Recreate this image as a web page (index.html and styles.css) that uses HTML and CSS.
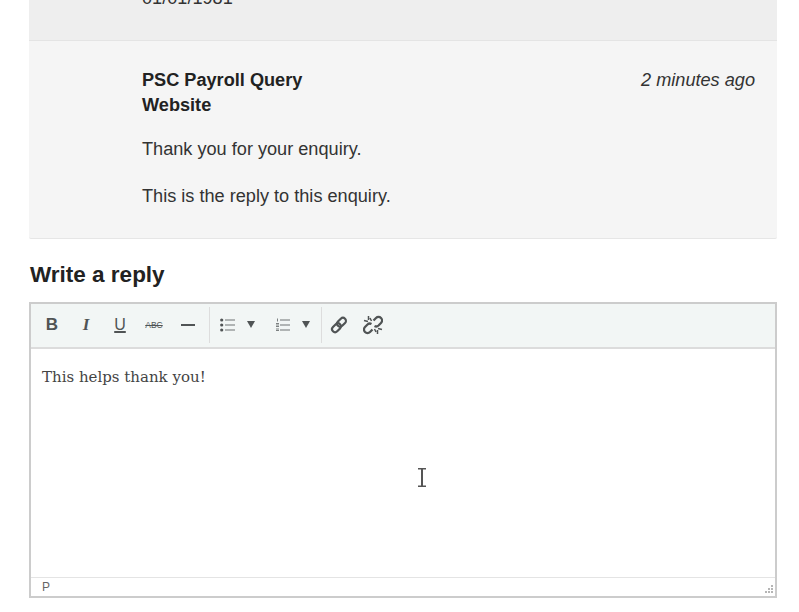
FILE: index.html
```html
<!DOCTYPE html>
<html>
<head>
<title>Write a reply</title>
<link rel="stylesheet" href="styles.css">
</head>
<body>
<div class="page">

<div class="msg msgOld">
  <div class="msgBody"><p class="oldDate">01/01/1981</p></div>
</div>

<div class="msg msgLast">
  <div class="msgBody">
    <div class="msgHead">
      <div class="msgFrom">PSC Payroll Query<br>Website</div>
      <div class="msgTime">2 minutes ago</div>
    </div>
    <p class="firstPara">Thank you for your enquiry.</p>
    <p>This is the reply to this enquiry.</p>
  </div>
</div>

<h2 class="replyTitle">Write a reply</h2>

<div class="editor">
  <div class="toolbar">
    <div class="tbGroup">
      <span class="tbBtn tbB">B</span>
      <span class="tbBtn tbI">I</span>
      <span class="tbBtn tbU">U</span>
      <span class="tbBtn tbS">ABC</span>
      <span class="tbBtn">
        <svg width="14" height="14" viewBox="0 0 14 14"><rect x="0" y="6" width="14" height="2" fill="#505455"/></svg>
      </span>
    </div>
    <div class="tbGroup tbGroupLists">
      <span class="tbBtn tbList">
        <svg width="15" height="14" viewBox="0 0 15 14">
          <g fill="#505455"><circle cx="1.700" cy="2" r="1.600"/><circle cx="1.700" cy="7" r="1.600"/><circle cx="1.700" cy="12" r="1.600"/></g>
          <g fill="#6f7374"><rect x="5" y="1.500" width="10" height="1"/><rect x="5" y="6.500" width="10" height="1"/><rect x="5" y="11.500" width="10" height="1"/></g>
        </svg>
        <i class="caret"></i>
      </span>
      <span class="tbBtn tbList">
        <svg width="15" height="14" viewBox="0 0 15 14">
          <g fill="#7d8182"><rect x="2" y="0.500" width="1" height="3"/><rect x="1" y="5" width="3" height="1"/><rect x="1" y="6.500" width="3" height="1"/><rect x="1" y="8" width="3" height="1"/><rect x="1" y="10.500" width="3" height="1"/><rect x="1" y="12" width="3" height="1"/></g>
          <g fill="#6f7374"><rect x="5" y="1.500" width="10" height="1"/><rect x="5" y="6.500" width="10" height="1"/><rect x="5" y="11.500" width="10" height="1"/></g>
        </svg>
        <i class="caret"></i>
      </span>
    </div>
    <div class="tbGroup tbLast">
      <span class="tbBtn">
        <svg width="18" height="18" viewBox="0 0 18 18" fill="none" stroke="#505455" stroke-width="2.200">
          <rect x="6.500" y="3.300" width="10" height="6" rx="3" transform="rotate(-45 11.500 6.300)"/>
          <rect x="1.500" y="8.700" width="10" height="6" rx="3" transform="rotate(-45 6.500 11.700)"/>
        </svg>
      </span>
      <span class="tbBtn">
        <svg width="20" height="20" viewBox="0 0 20 20" fill="none" stroke="#505455" stroke-width="2.300">
          <path d="M10.500 5.500L13 3a3.500 3.500 0 0 1 5 5l-2.500 2.500a3.500 3.500 0 0 1-4 .5"/>
          <path d="M9.500 14.500L7 17a3.500 3.500 0 0 1-5-5l2.500-2.500a3.500 3.500 0 0 1 4-.5"/>
          <path d="M5.500 1v4M1 5.500l4 1M14.500 19v-4M19 14.500l-4-1M7 3l1.500 3M13 17l-1.500-3" stroke-width="1.500"/>
        </svg>
      </span>
    </div>
  </div>
  <div class="editArea">This helps thank you!</div>
  <div class="statusBar">
    <span>P</span>
    <svg class="grip" width="10" height="10" viewBox="0 0 10 10" fill="#b5b5b5">
      <rect x="8" y="0" width="2" height="2"/>
      <rect x="5" y="3" width="2" height="2"/><rect x="8" y="3" width="2" height="2"/>
      <rect x="2" y="6" width="2" height="2"/><rect x="5" y="6" width="2" height="2"/><rect x="8" y="6" width="2" height="2"/>
    </svg>
  </div>
</div>

</div>
<svg class="ibeam" width="8" height="19" viewBox="0 0 8 19" fill="#555">
  <rect x="0" y="0" width="8" height="1.500"/>
  <rect x="3" y="1" width="2" height="17"/>
  <rect x="0" y="17.500" width="8" height="1.500"/>
</svg>
</body>
</html>
```

FILE: styles.css
```css
html, body { margin:0; padding:0; height:612px; overflow:hidden; background:#ffffff; }
body { font-family:"Liberation Sans",Arial,sans-serif; font-size:18.15px; color:#333333; }
p { margin:0; }

.page { width:748px; margin:-60px 0 0 29px; }

.msg { border-bottom:1px solid #e4e4e4; }
.msgBody { padding:0 22px 0 113px; }
.msgOld { height:100px; background:#eeeeee; }
.oldDate { padding-top:46px; line-height:25px; }
.msgLast { height:197px; background:#f5f5f5; border-bottom-color:#e6e6e6; border-radius:0 0 2px 2px; }
.msgLast .msgBody { padding-top:27px; }
.msgLast p { line-height:25px; margin-top:22px; }
.msgLast .firstPara { margin-top:19px; }
.msgHead { display:flex; justify-content:space-between; line-height:25px; }
.msgFrom { font-weight:bold; color:#222222; }
.msgTime { font-style:italic; }

.replyTitle { font-size:22.5px; line-height:30px; color:#222222; margin:21px 0 12px 1px; }

.editor { height:292px; border:2px solid #cccccc; display:flex; flex-direction:column; width:744px; }
.toolbar { height:41px; background:#f2f6f5; border-bottom:2px solid #dcdcdc; display:flex; align-items:center; padding:0 0 2px 4px; flex:none; }
.tbGroup { display:flex; align-items:center; height:36px; padding-right:4px; border-right:1px solid #dddddd; }
.tbGroupLists { padding-right:1px; }
.tbLast { border-right:0; }
.tbBtn { width:34px; text-align:center; color:#505455; display:flex; align-items:center; justify-content:center; height:30px; }
.tbB { font-weight:bold; font-size:17px; }
.tbI { font-style:italic; font-weight:bold; font-size:17px; font-family:"Liberation Serif",serif; }
.tbU { text-decoration:underline; text-decoration-thickness:2px; font-size:16px; }
.tbS { font-size:8.500px; text-decoration:line-through; }
.tbList { width:55px; gap:12px; justify-content:flex-start; padding-left:10px; box-sizing:border-box; }
.caret { width:0; height:0; border-left:4.500px solid transparent; border-right:4.500px solid transparent; border-top:7px solid #505455; }

.editArea { flex:1; background:#ffffff; padding:18px 11px 0; font-family:"DejaVu Serif",serif; font-size:15px; line-height:20px; color:#444444; }
.statusBar { height:18px; border-top:1px solid #e4e4e4; background:#ffffff; display:flex; justify-content:space-between; align-items:center; padding:0 2px 0 11px; font-size:12px; color:#666666; flex:none; }
.grip { align-self:flex-end; margin-bottom:1px; }

.ibeam { position:absolute; left:418px; top:468px; }
```
